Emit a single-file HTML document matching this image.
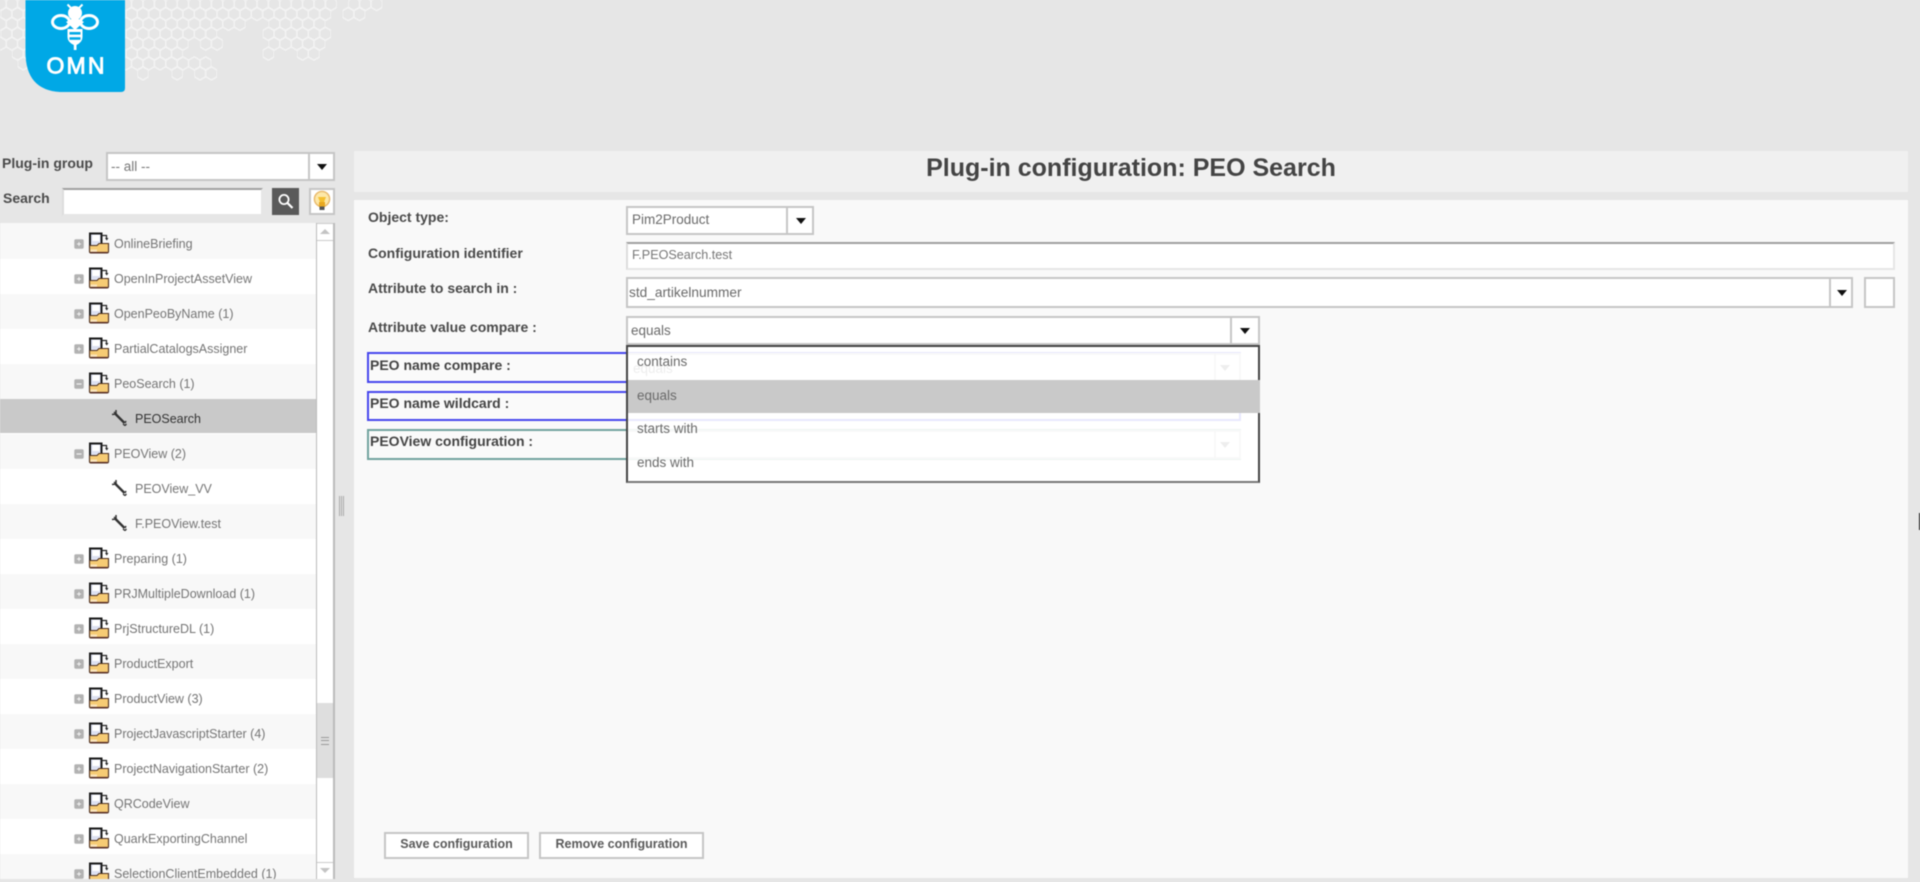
<!DOCTYPE html>
<html>
<head>
<meta charset="utf-8">
<title>Plug-in configuration</title>
<style>
html,body{margin:0;padding:0;width:1920px;height:882px;overflow:hidden;background:#e6e6e6;font-family:"Liberation Sans",Arial,sans-serif;}
#w{position:absolute;left:0;top:0;width:1920px;height:882px;overflow:hidden;filter:blur(.4px);}
#w div,#w span,#w svg.a{position:absolute;}
.l{font-weight:bold;font-size:14px;color:#4a4a4a;white-space:nowrap;line-height:16px;}
.box{background:#fff;border:2px solid #c6c6c6;box-sizing:border-box;}
.ins{background:#fff;border:2px solid #e6e6e6;border-top:2px solid #a0a0a0;border-left-color:#ddd;box-sizing:border-box;}
.v{font-size:13.5px;color:#6a6a6a;white-space:nowrap;line-height:16px;}
.div{top:0;bottom:0;width:2px;background:#c6c6c6;}
.tri{width:0;height:0;border-left:5px solid transparent;border-right:5px solid transparent;border-top:6px solid #111;}
.r{left:0;width:316px;height:35px;}
.r.g{background:#f8f8f8;}
.r.w{background:#fff;}
.r.s{background:#c9c9c9;height:34px;}
.t{font-size:12.5px;color:#757575;white-space:nowrap;line-height:16px;}
.btn{background:#fff;border:2px solid #c6c6c6;box-sizing:border-box;font-weight:bold;font-size:12.5px;color:#5a5a5a;text-align:center;line-height:21px;}
</style>
</head>
<body>
<div id="w">
<svg class="a" style="left:0;top:0" width="400" height="93" viewBox="0 0 400 93">
<defs>
<pattern id="A" patternUnits="userSpaceOnUse" x="0.5" y="6.4" width="11.4" height="19.8"><path d="M5.7 1L11.4 4.3V10.9L5.7 14.2L0 10.9V4.3Z" fill="none" stroke="#f3f3f3" stroke-width="1.5"/></pattern>
<pattern id="B" patternUnits="userSpaceOnUse" x="-5.2" y="-3.6" width="11.4" height="19.8"><path d="M5.7 1L11.4 4.3V10.9L5.7 14.2L0 10.9V4.3Z" fill="none" stroke="#f3f3f3" stroke-width="1.5"/></pattern>
</defs>
<g>
<rect x="-5.2" y="-3.6" width="342" height="15.2" fill="url(#B)"/><rect x="348.2" y="-3.6" width="34.2" height="15.2" fill="url(#B)"/>
<rect x="0.5" y="6.4" width="330.6" height="15.2" fill="url(#A)"/><rect x="342.5" y="6.4" width="22.8" height="15.2" fill="url(#A)"/>
<rect x="-5.2" y="16.2" width="250.8" height="15.2" fill="url(#B)"/><rect x="268.4" y="16.2" width="57" height="15.2" fill="url(#B)"/>
<rect x="0.5" y="26.2" width="216.6" height="15.2" fill="url(#A)"/><rect x="262.7" y="26.2" width="68.4" height="15.2" fill="url(#A)"/>
<rect x="-5.2" y="36" width="193.8" height="15.2" fill="url(#B)"/><rect x="200" y="36" width="22.8" height="15.2" fill="url(#B)"/><rect x="268.4" y="36" width="57" height="15.2" fill="url(#B)"/>
<rect x="11.9" y="46" width="171" height="15.2" fill="url(#A)"/><rect x="262.7" y="46" width="11.4" height="15.2" fill="url(#A)"/><rect x="296.9" y="46" width="22.8" height="15.2" fill="url(#A)"/>
<rect x="17.6" y="55.8" width="193.8" height="15.2" fill="url(#B)"/>
<rect x="137.3" y="65.8" width="11.4" height="15.2" fill="url(#A)"/><rect x="171.5" y="65.8" width="11.4" height="15.2" fill="url(#A)"/><rect x="194.3" y="65.8" width="22.8" height="15.2" fill="url(#A)"/>
</g>
<path d="M25.5 0H125V88Q125 92 121 92H60Q25.5 90 25.5 52Z" fill="#00a8e6"/>
<g fill="none" stroke="#fff" stroke-width="3">
<ellipse cx="61" cy="22" rx="8.5" ry="6.5"/><ellipse cx="89" cy="22" rx="8.5" ry="6.5"/>
<path d="M67.5 4.5L72 9M82.5 4.5L78 9" stroke-width="2"/>
</g>
<circle cx="75" cy="13" r="7" fill="#fff"/>
<path d="M66 22L75 17L84 22L75 30Z" fill="#fff"/>
<path d="M67.5 29H82.5V37Q82.5 42 76.5 45V50H73.8V45Q67.5 42 67.5 37Z" fill="#fff"/>
<rect x="69.5" y="32" width="11" height="2.6" fill="#00a8e6"/><rect x="69.5" y="37.2" width="11" height="2.6" fill="#00a8e6"/>
<text x="46.5" y="73.5" font-family="Liberation Sans" font-size="23" fill="#fff" stroke="#fff" stroke-width=".9" textLength="58" lengthAdjust="spacing">OMN</text>
</svg>

<!-- left controls -->
<div class="l" style="left:2px;top:155px;">Plug-in group</div>
<div class="box" style="left:106px;top:152px;width:229px;height:29px;">
  <div class="v" style="left:3px;top:5px;color:#777;">-- all --</div>
  <div class="div" style="left:200px;"></div>
  <div class="tri" style="left:209px;top:10px;"></div>
</div>
<div class="l" style="left:3px;top:190px;">Search</div>
<div class="ins" style="left:62px;top:188px;width:201px;height:28px;"></div>
<div style="left:272px;top:188px;width:27px;height:27px;background:#5a5a5a;"></div>
<svg class="a" style="left:272px;top:188px" width="27" height="27"><circle cx="12" cy="11.5" r="4.6" fill="none" stroke="#fff" stroke-width="1.8"/><path d="M15.5 15L20.5 20" stroke="#fff" stroke-width="2.2"/></svg>
<div class="box" style="left:309px;top:188px;width:26px;height:27px;"></div>
<svg class="a" style="left:309px;top:188px" width="26" height="27"><circle cx="13" cy="11" r="7.6" fill="#fde8a8" stroke="#e8b86a" stroke-width="1.4"/><path d="M9 9L11 14H15L17 9" fill="#f5c030"/><rect x="10" y="14" width="6" height="5" fill="#e8a820"/><rect x="10.5" y="18.5" width="5" height="3.5" fill="#555"/></svg>

<!-- tree -->
<div style="left:0;top:223px;width:316px;height:656px;overflow:hidden;background:#fff;">
  <div class="r g" style="top:0;height:36px;"></div>
  <div class="r w" style="top:36px;"></div>
  <div class="r g" style="top:71px;"></div>
  <div class="r w" style="top:106px;"></div>
  <div class="r g" style="top:141px;"></div>
  <div class="r s" style="top:176px;"></div>
  <div class="r g" style="top:211px;"></div>
  <div class="r w" style="top:246px;"></div>
  <div class="r g" style="top:281px;"></div>
  <div class="r w" style="top:316px;"></div>
  <div class="r g" style="top:351px;"></div>
  <div class="r w" style="top:386px;"></div>
  <div class="r g" style="top:421px;"></div>
  <div class="r w" style="top:456px;"></div>
  <div class="r g" style="top:491px;"></div>
  <div class="r w" style="top:526px;"></div>
  <div class="r g" style="top:561px;"></div>
  <div class="r w" style="top:596px;"></div>
  <div class="r g" style="top:631px;"></div>

  <svg class="a" style="left:0;top:0" width="316" height="656">
    <defs>
      <symbol id="fo" width="22" height="22" viewBox="0 0 22 22" overflow="visible">
        <path d="M2 1.5H13.5V14H2Z" fill="#dde1f2" stroke="#1a1a1a" stroke-width="2"/>
        <path d="M4.5 3H11.5V9H4.5Z" fill="#fff"/>
        <path d="M13 3.5H18.5V6.5" fill="none" stroke="#222" stroke-width="1.2"/>
        <path d="M17 6H20.5L18.7 8.5Z" fill="#222"/>
        <path d="M1.5 13.5H9L11 11.5H20.5V19.5Q20.5 21 19 21H3Q1.5 21 1.5 19.5Z" fill="#f6cb74" stroke="#4d2f20" stroke-width="1.1"/>
        <path d="M2.5 17.5H9V20H2.5Z" fill="#fbe6bd"/>
        <path d="M2.5 20.6H19.5" stroke="#5a2f28" stroke-width="1.4"/>
      </symbol>
      <symbol id="pl" width="10" height="10" viewBox="0 0 10 10">
        <rect x=".3" y=".3" width="9.4" height="9.4" rx="1.6" fill="#b2b2b2"/>
        <path d="M3 5H7M5 3V7" stroke="#f2f2f2" stroke-width="1"/>
      </symbol>
      <symbol id="mi" width="10" height="10" viewBox="0 0 10 10">
        <rect x=".3" y=".3" width="9.4" height="9.4" rx="1.6" fill="#b2b2b2"/>
        <path d="M2.5 5H7.5" stroke="#f2f2f2" stroke-width="1.2"/>
      </symbol>
      <symbol id="wr" width="17" height="17" viewBox="0 0 17 17">
        <path d="M4.5 5L13.5 14" stroke="#333" stroke-width="2.4"/>
        <path d="M5 1L5 5L1 5.5M3 3L6 6" fill="none" stroke="#333" stroke-width="1.5"/>
        <path d="M12 15L14 16.5L15.5 15M15 12L14 14" fill="none" stroke="#333" stroke-width="1.4"/>
      </symbol>
    </defs>
    <use href="#pl" x="74" y="16"/><use href="#fo" x="88" y="9"/>
    <use href="#pl" x="74" y="51"/><use href="#fo" x="88" y="44"/>
    <use href="#pl" x="74" y="86"/><use href="#fo" x="88" y="79"/>
    <use href="#pl" x="74" y="121"/><use href="#fo" x="88" y="114"/>
    <use href="#mi" x="74" y="156"/><use href="#fo" x="88" y="149"/>
    <use href="#wr" x="111" y="186"/>
    <use href="#mi" x="74" y="226"/><use href="#fo" x="88" y="219"/>
    <use href="#wr" x="111" y="256"/>
    <use href="#wr" x="111" y="291"/>
    <use href="#pl" x="74" y="331"/><use href="#fo" x="88" y="324"/>
    <use href="#pl" x="74" y="366"/><use href="#fo" x="88" y="359"/>
    <use href="#pl" x="74" y="401"/><use href="#fo" x="88" y="394"/>
    <use href="#pl" x="74" y="436"/><use href="#fo" x="88" y="429"/>
    <use href="#pl" x="74" y="471"/><use href="#fo" x="88" y="464"/>
    <use href="#pl" x="74" y="506"/><use href="#fo" x="88" y="499"/>
    <use href="#pl" x="74" y="541"/><use href="#fo" x="88" y="534"/>
    <use href="#pl" x="74" y="576"/><use href="#fo" x="88" y="569"/>
    <use href="#pl" x="74" y="611"/><use href="#fo" x="88" y="604"/>
    <use href="#pl" x="74" y="646"/><use href="#fo" x="88" y="639"/>
  </svg>

  <div class="t" style="left:114px;top:13px;">OnlineBriefing</div>
  <div class="t" style="left:114px;top:48px;">OpenInProjectAssetView</div>
  <div class="t" style="left:114px;top:83px;">OpenPeoByName (1)</div>
  <div class="t" style="left:114px;top:118px;">PartialCatalogsAssigner</div>
  <div class="t" style="left:114px;top:153px;">PeoSearch (1)</div>
  <div class="t" style="left:135px;top:188px;color:#333;">PEOSearch</div>
  <div class="t" style="left:114px;top:223px;">PEOView (2)</div>
  <div class="t" style="left:135px;top:258px;">PEOView_VV</div>
  <div class="t" style="left:135px;top:293px;">F.PEOView.test</div>
  <div class="t" style="left:114px;top:328px;">Preparing (1)</div>
  <div class="t" style="left:114px;top:363px;">PRJMultipleDownload (1)</div>
  <div class="t" style="left:114px;top:398px;">PrjStructureDL (1)</div>
  <div class="t" style="left:114px;top:433px;">ProductExport</div>
  <div class="t" style="left:114px;top:468px;">ProductView (3)</div>
  <div class="t" style="left:114px;top:503px;">ProjectJavascriptStarter (4)</div>
  <div class="t" style="left:114px;top:538px;">ProjectNavigationStarter (2)</div>
  <div class="t" style="left:114px;top:573px;">QRCodeView</div>
  <div class="t" style="left:114px;top:608px;">QuarkExportingChannel</div>
  <div class="t" style="left:114px;top:643px;">SelectionClientEmbedded (1)</div>
</div>

<!-- scrollbar -->
<div style="left:316px;top:223px;width:19px;height:656px;background:#fff;border-left:1px solid #bbb;border-right:2px solid #bbb;box-sizing:border-box;"></div>
<div style="left:317px;top:223px;width:16px;height:1px;background:#ccc;"></div>
<div style="left:317px;top:240px;width:16px;height:1px;background:#ccc;"></div>
<div style="left:320px;top:229px;width:0;height:0;border-left:5px solid transparent;border-right:5px solid transparent;border-bottom:5px solid #c4c4c4;"></div>
<div style="left:317px;top:703px;width:16px;height:75px;background:#dedede;"></div>
<div style="left:321px;top:737px;width:8px;height:8px;border-top:1px solid #999;border-bottom:1px solid #999;box-sizing:border-box;"></div>
<div style="left:321px;top:740px;width:8px;height:2px;border-top:1px solid #999;"></div>
<div style="left:317px;top:862px;width:16px;height:1px;background:#ccc;"></div>
<div style="left:320px;top:868px;width:0;height:0;border-left:5px solid transparent;border-right:5px solid transparent;border-top:5px solid #c4c4c4;"></div>

<!-- splitter -->
<div style="left:339px;top:496px;width:1px;height:20px;background:#aaa;"></div>
<div style="left:341px;top:496px;width:1px;height:20px;background:#aaa;"></div>
<div style="left:343px;top:496px;width:1px;height:20px;background:#aaa;"></div>

<!-- right panels -->
<div style="left:354px;top:151px;width:1554px;height:41px;background:#f0f0f0;"></div>
<div style="left:354px;top:154px;width:1554px;text-align:center;font-weight:bold;font-size:25px;line-height:28px;color:#444;">Plug-in configuration: PEO Search</div>
<div style="left:354px;top:200px;width:1554px;height:678px;background:#f9f9f9;"></div>

<div class="l" style="left:368px;top:209px;">Object type:</div>
<div class="box" style="left:626px;top:206px;width:188px;height:29px;">
  <div class="v" style="left:4px;top:4px;">Pim2Product</div>
  <div class="div" style="left:158px;"></div>
  <div class="tri" style="left:168px;top:10px;"></div>
</div>
<div class="l" style="left:368px;top:245px;">Configuration identifier</div>
<div class="ins" style="left:626px;top:242px;width:1269px;height:28px;">
  <div class="v" style="left:4px;top:3px;font-size:12.6px;color:#777;">F.PEOSearch.test</div>
</div>
<div class="l" style="left:368px;top:280px;">Attribute to search in :</div>
<div class="box" style="left:626px;top:277px;width:1227px;height:31px;">
  <div class="v" style="left:1px;top:6px;font-size:13.7px;">std_artikelnummer</div>
  <div class="div" style="left:1201px;"></div>
  <div class="tri" style="left:1209px;top:11px;"></div>
</div>
<div class="box" style="left:1864px;top:277px;width:31px;height:31px;"></div>
<div class="l" style="left:368px;top:319px;">Attribute value compare :</div>

<!-- fields under dropdown -->
<div style="left:367px;top:352px;width:874px;height:31px;border:2px solid #4646ee;box-sizing:border-box;background:#fafafa;"></div>
<div class="l" style="left:370px;top:357px;color:#444;">PEO name compare :</div>
<div class="box" style="left:626px;top:353px;width:615px;height:29px;border-color:#ccc;background:#fff;"></div>
<div class="v" style="left:633px;top:361px;">equals</div>
<div class="div" style="left:1214px;top:353px;height:29px;bottom:auto;"></div>
<div class="tri" style="left:1220px;top:365px;border-top-color:#777;"></div>
<div style="left:367px;top:391px;width:874px;height:30px;border:2px solid #4646ee;box-sizing:border-box;background:#fafafa;"></div>
<div class="l" style="left:370px;top:395px;color:#444;">PEO name wildcard :</div>
<div style="left:367px;top:429px;width:874px;height:31px;border:2px solid #72a39e;box-sizing:border-box;background:#fafafa;"></div>
<div class="l" style="left:370px;top:433px;color:#444;">PEOView configuration :</div>
<div class="box" style="left:626px;top:430px;width:615px;height:29px;border-color:#ccc;background:#fff;"></div>
<div class="div" style="left:1214px;top:430px;height:29px;bottom:auto;"></div>
<div class="tri" style="left:1220px;top:442px;border-top-color:#777;"></div>

<!-- attr compare select -->
<div class="box" style="left:626px;top:316px;width:634px;height:29px;">
  <div class="v" style="left:3px;top:5px;">equals</div>
  <div class="div" style="left:602px;"></div>
  <div class="tri" style="left:612px;top:10px;"></div>
</div>
<!-- dropdown -->
<div style="left:626px;top:345px;width:634px;height:138px;box-sizing:border-box;border:2px solid #444;border-bottom-color:#777;background:rgba(255,255,255,.88);">
  <div style="left:0;top:33px;width:632px;height:33px;background:#c9c9c9;"></div>
  <div class="v" style="left:9px;top:7px;">contains</div>
  <div class="v" style="left:9px;top:41px;">equals</div>
  <div class="v" style="left:9px;top:74px;">starts with</div>
  <div class="v" style="left:9px;top:108px;">ends with</div>
</div>

<div class="btn" style="left:384px;top:832px;width:145px;height:27px;">Save configuration</div>
<div class="btn" style="left:539px;top:832px;width:165px;height:27px;">Remove configuration</div>

<div style="left:1919px;top:513px;width:1px;height:17px;background:#111;"></div>
</div>
</body>
</html>
